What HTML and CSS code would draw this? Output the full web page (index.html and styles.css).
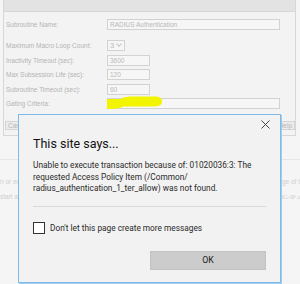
FILE: index.html
```html
<!DOCTYPE html>
<html lang="en">
<head>
  <meta charset="UTF-8" />
  <title>This site says...</title>
  <link rel="stylesheet" href="styles.css">
</head>
<body>
  <!-- Background properties panel -->
  <div class="panel">
    <div class="panel-head"></div>
    <div class="form">
      <div class="row first">
        <label>Subroutine Name:</label>
        <div class="field long">RADIUS Authentication</div>
      </div>
      <div class="row">
        <label>Maximum Macro Loop Count:</label>
        <div class="field select">3 <span class="caret"></span></div>
      </div>
      <div class="row">
        <label>Inactivity Timeout (sec):</label>
        <div class="field short">3600</div>
      </div>
      <div class="row">
        <label>Max Subsession Life (sec):</label>
        <div class="field short">120</div>
      </div>
      <div class="row">
        <label>Subroutine Timeout (sec):</label>
        <div class="field short">60</div>
      </div>
      <div class="row">
        <label>Gating Criteria:</label>
        <div class="field long gating">
          <svg class="marker" width="56" height="14" viewBox="0 0 56 14">
            <path d="M0 3 L14 3 C16 1 20 0.5 28 0.5 L48 0.5 C54 0.5 55 3 55 6 C55 9 52 10.5 46 10.5 L16 10.5 C14 12 10 13 4 13 L0 13 Z" fill="#f3f400"/>
          </svg>
        </div>
      </div>
    </div>
    <div class="panel-foot">
      <button class="btn">Cancel</button>
      <button class="btn">Help</button>
    </div>
  </div>

  <div class="page-rows">
    <div class="page-row"><span>n or end</span><span>ige of t</span></div>
    <div class="page-row"><span>start an</span><span class="serif">IG-IP a</span></div>
  </div>

  <!-- Alert dialog -->
  <div class="alert">
    <span class="close">
      <svg width="9" height="9" viewBox="0 0 9 9"><path d="M0.5 0.5 L8.5 8.5 M8.5 0.5 L0.5 8.5" stroke="#333" stroke-width="0.9"/></svg>
    </span>
    <div class="alert-title">This site says...</div>
    <div class="alert-msg">Unable to execute transaction because of: 01020036:3: The<br>requested Access Policy Item (/Common/<br>radius_authentication_1_ter_allow) was not found.</div>
    <div class="alert-sep"></div>
    <label class="check"><span class="box"></span>Don't let this page create more messages</label>
    <div class="alert-actions">
      <button class="ok">OK</button>
    </div>
  </div>
</body>
</html>
```

FILE: styles.css
```css
* { margin: 0; padding: 0; box-sizing: border-box; }
body {
  background-color: #f5f5f5;
  width: 300px;
  height: 284px;
  overflow: hidden;
  position: relative;
  font-family: 'Liberation Sans', Arial, sans-serif;
}

.panel {
  margin-left: 3px;
  width: 293px;
  height: 136px;
  background-color: #f3f3f3;
  border: 1px solid #d7d7d7;
  border-top: none;
}
.panel-head {
  height: 12px;
  background-color: #e3e3e3;
  border-bottom: 1px solid #d6d6d6;
}
.form { padding: 7px 0 0 2px; }
.row {
  display: flex;
  align-items: center;
  height: 11px;
  margin-bottom: 3.5px;
}
.row.first { margin-bottom: 10px; }
.row label {
  width: 101px;
  font-size: 6.5px;
  color: #b3b3b3;
}
.field {
  height: 11px;
  border: 1px solid #d2d2d2;
  background-color: #f6f6f6;
  font-size: 6.5px;
  color: #b9b9b9;
  padding: 0 2px;
  line-height: 9px;
}
.field.long { width: 173px; }
.field.short { width: 43px; }
.field.select { width: 18px; font-size: 7.5px; display: flex; align-items: center; gap: 3px; }
.caret {
  width: 4px;
  height: 4px;
  border-right: 1px solid #c4c4c4;
  border-bottom: 1px solid #c4c4c4;
  transform: rotate(45deg);
  margin-top: -3px;
}
.gating { position: relative; }
.marker { position: absolute; left: -1px; top: -3px; }

.panel-foot {
  display: flex;
  justify-content: space-between;
  margin-top: 12px;
  padding: 0 0 0 1px;
}
.btn {
  height: 9px;
  padding: 0 2px;
  font-family: 'Liberation Sans', Arial, sans-serif;
  font-size: 6.5px;
  line-height: 7px;
  color: #b7b7b7;
  background-color: #ececec;
  border: 1px solid #d4d4d4;
}

.page-rows {
  margin-top: 23px;
  border-top: 1px solid #e5e5e5;
  padding-top: 18px;
}
.page-row {
  display: flex;
  justify-content: space-between;
  font-size: 6.5px;
  color: #cfcfcf;
  height: 15px;
  white-space: nowrap;
}
.serif { font-family: 'Liberation Serif', serif; }

.alert {
  position: absolute;
  left: 18px;
  top: 114px;
  width: 263px;
  height: 169px;
  background-color: #f2f2f2;
  border: 1px solid #7fbbea;
  box-shadow: 1px 1px 0 #9fcdf0;
  padding: 0 14px;
  font-family: Roboto, 'Open Sans', sans-serif;
  color: #222;
}
.close { position: absolute; right: 10px; top: 5px; line-height: 0; }
.alert-title {
  font-size: 12.5px;
  color: #111;
  padding-top: 20px;
  line-height: 18px;
}
.alert-msg {
  margin-top: 7px;
  font-size: 8.3px;
  line-height: 11.5px;
  color: #2a2a2a;
}
.alert-sep {
  margin-top: 11px;
  height: 1px;
  background-color: #d9d9d9;
}
.check {
  display: flex;
  align-items: center;
  gap: 5px;
  margin-top: 15px;
  font-size: 8.3px;
  color: #2a2a2a;
}
.box {
  width: 12px;
  height: 12px;
  border: 1px solid #333;
  background-color: #fff;
}
.alert-actions {
  display: flex;
  justify-content: flex-end;
  margin-top: 17px;
}
.ok {
  width: 116px;
  height: 19px;
  background-color: #cccccc;
  border: 1px solid #c2c2c2;
  font-family: Roboto, 'Open Sans', sans-serif;
  font-size: 8.8px;
  color: #222;
}
```
